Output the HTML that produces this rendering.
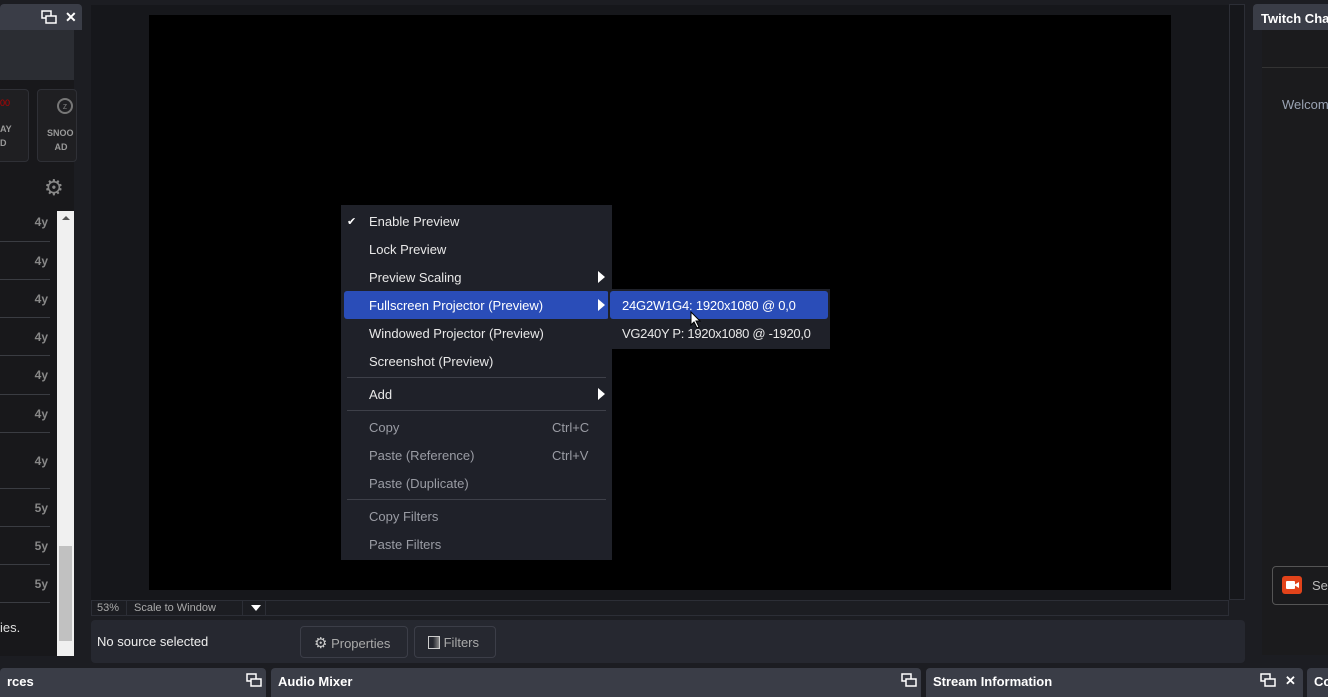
<!DOCTYPE html>
<html><head><style>
*{box-sizing:border-box;margin:0;padding:0}
body{width:1328px;height:697px;background:#1c1d22;position:relative;overflow:hidden;font-family:"Liberation Sans",sans-serif;color:#e0e0e0;font-size:13px}
.a{position:absolute;white-space:nowrap}
.hdr{background:#3a3d47;color:#fff;font-weight:bold;font-size:13px;padding:4px 7px;border-radius:4px 4px 0 0;overflow:hidden}
.mi{position:absolute;left:28px;font-size:13px;color:#e8e8e8;white-space:nowrap}
.dis{color:#9a9ca4}
.row{position:absolute;left:0;width:50px;border-bottom:1px solid #3a3c42;color:#888;font-weight:bold;font-size:12px;text-align:right;padding-right:22px}
.arr{position:absolute;width:0;height:0;border-top:6px solid transparent;border-bottom:6px solid transparent;border-left:7px solid #fff}
.sep{position:absolute;left:6px;right:6px;height:1px;background:#3e4049}
</style></head><body>
<!-- left dock -->
<div class="a hdr" style="left:0;top:4px;width:82px;height:26px"></div>
<svg class="a" style="left:41px;top:10px" width="16" height="14"><rect x="1" y="1" width="9" height="7" fill="none" stroke="#fff" stroke-width="1.5"/><rect x="5" y="6" width="10" height="7" fill="#3a3d47" stroke="#fff" stroke-width="1.5"/></svg>
<div class="a" style="left:65px;top:9px;color:#fff;font-weight:bold;font-size:14px">✕</div>
<div class="a" style="left:0;top:30px;width:74px;height:626px;background:#18181b"></div>
<div class="a" style="left:0;top:30px;width:74px;height:30px;background:#2b2d33"></div>
<div class="a" style="left:0;top:60px;width:74px;height:1px;background:#3a3c42"></div>
<div class="a" style="left:-10px;top:67px;width:39px;height:55px;border:1px solid #2f3036;border-radius:4px;background:#1f1f22;top:89px;height:73px"></div>
<div class="a" style="left:0;top:98px;color:#b00;font-size:9px">00</div>
<div class="a" style="left:0;top:122px;color:#999;font-size:9px;font-weight:bold;line-height:14px">AY<br>D</div>
<div class="a" style="left:37px;top:89px;width:40px;height:73px;border:1px solid #2f3036;border-radius:4px;background:#1f1f22"></div>
<div class="a" style="left:57px;top:98px;width:16px;height:16px;border:2px solid #777;border-radius:50%;color:#777;font-size:9px;text-align:center;line-height:12px">z</div>
<div class="a" style="left:47px;top:126px;color:#999;font-size:9px;font-weight:bold;line-height:14px">SNOO<br>&nbsp;&nbsp;&nbsp;AD</div>
<div class="a" style="left:44px;top:175px;color:#888;font-size:22px">⚙</div>
<div class="a" style="left:0;top:40px;width:74px;height:40px;background:#2b2d33"></div>
<div class="row" style="top:205px;height:37px;line-height:34px;width:50px;padding-right:2px">4y</div>
<div class="row" style="top:242px;height:38px;line-height:38px;padding-right:2px">4y</div>
<div class="row" style="top:280px;height:38px;line-height:38px;padding-right:2px">4y</div>
<div class="row" style="top:318px;height:38px;line-height:38px;padding-right:2px">4y</div>
<div class="row" style="top:356px;height:39px;line-height:39px;padding-right:2px">4y</div>
<div class="row" style="top:395px;height:38px;line-height:38px;padding-right:2px">4y</div>
<div class="row" style="top:433px;height:56px;line-height:56px;padding-right:2px">4y</div>
<div class="row" style="top:489px;height:38px;line-height:38px;padding-right:2px">5y</div>
<div class="row" style="top:527px;height:38px;line-height:38px;padding-right:2px">5y</div>
<div class="row" style="top:565px;height:38px;line-height:38px;padding-right:2px">5y</div>
<div class="a" style="left:0;top:620px;color:#ddd;font-size:13px">ies.</div>
<div class="a" style="left:57px;top:211px;width:17px;height:445px;background:#f0f0f0"></div>
<div class="a" style="left:59px;top:546px;width:13px;height:95px;background:#c1c1c1"></div>
<div class="a" style="left:62px;top:216px;border-left:4px solid transparent;border-right:4px solid transparent;border-bottom:4px solid #555"></div>
<!-- preview area -->
<div class="a" style="left:91px;top:5px;width:1138px;height:595px;background:#16171b"></div>
<div class="a" style="left:1229px;top:4px;width:16px;height:596px;border:1px solid #2c2e36;background:#16171b"></div>
<div class="a" style="left:149px;top:15px;width:1022px;height:575px;background:#000"></div>
<div class="a" style="left:91px;top:600px;width:1138px;height:16px;background:#1c1d22;border:1px solid #2c2e36"></div>
<div class="a" style="left:97px;top:602px;font-size:11px;color:#aaa">53%</div>
<div class="a" style="left:126px;top:601px;width:1px;height:15px;background:#2c2e36"></div>
<div class="a" style="left:134px;top:602px;font-size:11px;color:#aaa">Scale to Window</div>
<div class="a" style="left:242px;top:601px;width:1px;height:15px;background:#2c2e36"></div>
<div class="a" style="left:251px;top:605px;border-left:5px solid transparent;border-right:5px solid transparent;border-top:6px solid #fff"></div>
<div class="a" style="left:265px;top:601px;width:1px;height:15px;background:#2c2e36"></div>
<div class="a" style="left:91px;top:620px;width:1154px;height:43px;background:#262830;border-radius:4px"></div>
<div class="a" style="left:97px;top:634px;font-size:13px;color:#eee">No source selected</div>
<div class="a" style="left:300px;top:626px;width:108px;height:32px;border:1px solid #3c3e48;border-radius:4px;color:#aaa;font-size:13px;padding:7px 0 0 13px"><span style="color:#ccc;font-size:15px">⚙</span> Properties</div>
<div class="a" style="left:414px;top:626px;width:82px;height:32px;border:1px solid #3c3e48;border-radius:4px;color:#aaa;font-size:13px;padding:8px 0 0 13px"><span style="display:inline-block;width:12px;height:13px;border:1px solid #ccc;vertical-align:-2px;background:linear-gradient(90deg,#262830 40%,#888)"></span> Filters</div>
<!-- right dock -->
<div class="a hdr" style="left:1253px;top:4px;width:80px;height:26px;padding-left:8px;padding-top:7px">Twitch Cha</div>
<div class="a" style="left:1262px;top:30px;width:66px;height:625px;background:#1b1b1d"></div>
<div class="a" style="left:1262px;top:67px;width:66px;height:1px;background:#333"></div>
<div class="a" style="left:1282px;top:97px;color:#9aa3b3;font-size:13px">Welcom</div>
<div class="a" style="left:1272px;top:566px;width:70px;height:39px;border:1px solid #555;border-radius:4px"></div>
<div class="a" style="left:1282px;top:576px;width:20px;height:18px;background:#e2431a;border-radius:3px"></div>
<div class="a" style="left:1286px;top:581px;width:9px;height:8px;background:#fff;border-radius:1px"></div>
<div class="a" style="left:1294px;top:582px;border-top:3px solid transparent;border-bottom:3px solid transparent;border-right:5px solid #fff"></div>
<div class="a" style="left:1312px;top:578px;color:#bbb;font-size:13px">Se</div>
<!-- bottom docks -->
<div class="a hdr" style="left:0;top:668px;width:266px;height:29px;padding-top:6px">rces</div>
<svg class="a" style="left:246px;top:673px" width="16" height="14"><rect x="1" y="1" width="9" height="7" fill="none" stroke="#fff" stroke-width="1.5"/><rect x="5" y="6" width="10" height="7" fill="#3a3d47" stroke="#fff" stroke-width="1.5"/></svg>
<div class="a hdr" style="left:271px;top:668px;width:650px;height:29px;padding-top:6px">Audio Mixer</div>
<svg class="a" style="left:901px;top:673px" width="16" height="14"><rect x="1" y="1" width="9" height="7" fill="none" stroke="#fff" stroke-width="1.5"/><rect x="5" y="6" width="10" height="7" fill="#3a3d47" stroke="#fff" stroke-width="1.5"/></svg>
<div class="a hdr" style="left:926px;top:668px;width:377px;height:29px;padding-top:6px">Stream Information</div>
<svg class="a" style="left:1260px;top:673px" width="16" height="14"><rect x="1" y="1" width="9" height="7" fill="none" stroke="#fff" stroke-width="1.5"/><rect x="5" y="6" width="10" height="7" fill="#3a3d47" stroke="#fff" stroke-width="1.5"/></svg>
<div class="a" style="left:1285px;top:673px;color:#fff;font-weight:bold;font-size:13px">✕</div>
<div class="a hdr" style="left:1307px;top:668px;width:30px;height:29px;padding-top:6px">Co</div>
<!-- context menu -->
<div class="a" style="left:341px;top:205px;width:271px;height:355px;background:#1f2129">
<div class="a" style="left:6px;top:10px;font-size:11px;color:#fff">✔</div>
<div class="mi" style="top:9px">Enable Preview</div>
<div class="mi" style="top:37px">Lock Preview</div>
<div class="mi" style="top:65px">Preview Scaling</div>
<div class="arr" style="left:257px;top:66px"></div>
<div class="a" style="left:3px;top:86px;width:265px;height:28px;background:#2a4db8;border-radius:3px"></div>
<div class="mi" style="top:93px;color:#fff">Fullscreen Projector (Preview)</div>
<div class="arr" style="left:257px;top:94px"></div>
<div class="mi" style="top:121px">Windowed Projector (Preview)</div>
<div class="mi" style="top:149px">Screenshot (Preview)</div>
<div class="sep" style="top:172px"></div>
<div class="mi" style="top:182px">Add</div>
<div class="arr" style="left:257px;top:183px"></div>
<div class="sep" style="top:205px"></div>
<div class="mi dis" style="top:215px">Copy</div><div class="a dis" style="left:211px;top:215px">Ctrl+C</div>
<div class="mi dis" style="top:243px">Paste (Reference)</div><div class="a dis" style="left:211px;top:243px">Ctrl+V</div>
<div class="mi dis" style="top:271px">Paste (Duplicate)</div>
<div class="sep" style="top:294px"></div>
<div class="mi dis" style="top:304px">Copy Filters</div>
<div class="mi dis" style="top:332px">Paste Filters</div>
</div>
<div class="a" style="left:608px;top:289px;width:222px;height:60px;background:#1f2129">
<div class="a" style="left:2px;top:2px;width:218px;height:28px;background:#2a4db8;border-radius:3px"></div>
<div class="a" style="left:14px;top:9px;color:#fff;letter-spacing:-0.2px">24G2W1G4: 1920x1080 @ 0,0</div>
<div class="a" style="left:14px;top:37px;color:#e8e8e8;letter-spacing:-0.3px">VG240Y P: 1920x1080 @ -1920,0</div>
</div>
<svg class="a" style="left:690px;top:311px" width="12" height="18"><path d="M1 1 L1 14 L4 11 L7 17 L9 16 L6 10 L10 10 Z" fill="#fff" stroke="#000" stroke-width="1"/></svg>
</body></html>
